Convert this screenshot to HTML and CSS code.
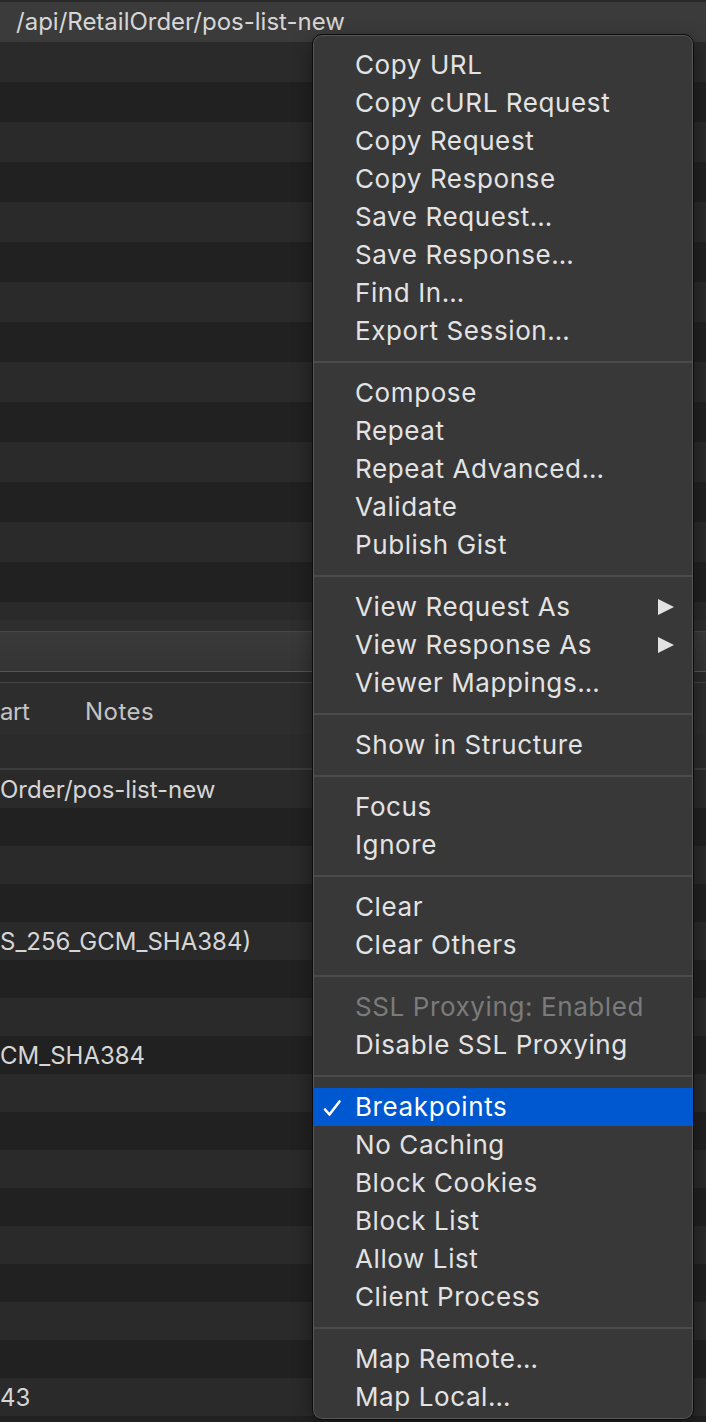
FILE: index.html
```html
<!DOCTYPE html>
<html>
<head>
<meta charset="utf-8">
<link rel="stylesheet" href="styles.css">
</head>
<body>
<div class="app">
  <div class="urlbar">/api/RetailOrder/pos-list-new</div>
  <div class="upper">
    <div class="urow light"></div><div class="urow dark"></div>
    <div class="urow light"></div><div class="urow dark"></div>
    <div class="urow light"></div><div class="urow dark"></div>
    <div class="urow light"></div><div class="urow dark"></div>
    <div class="urow light"></div><div class="urow dark"></div>
    <div class="urow light"></div><div class="urow dark"></div>
    <div class="urow light"></div><div class="urow dark"></div>
    <div class="urow-tail"></div>
  </div>
  <div class="panel"></div>
  <div class="gap"></div>
  <div class="header">
    <span class="hcell start">art</span>
    <span class="hcell notes">Notes</span>
  </div>
  <div class="subheader"></div>
  <div class="lower">
    <div class="lrow light"><span class="cell">Order/pos-list-new</span></div>
    <div class="lrow dark"></div>
    <div class="lrow light"></div>
    <div class="lrow dark"></div>
    <div class="lrow light"><span class="cell">S_256_GCM_SHA384)</span></div>
    <div class="lrow dark"></div>
    <div class="lrow light"></div>
    <div class="lrow dark"><span class="cell">CM_SHA384</span></div>
    <div class="lrow light"></div>
    <div class="lrow dark"></div>
    <div class="lrow light"></div>
    <div class="lrow dark"></div>
    <div class="lrow light"></div>
    <div class="lrow dark"></div>
    <div class="lrow light"></div>
    <div class="lrow dark"></div>
    <div class="lrow light"><span class="cell">43</span></div>
    <div class="lrow dark"></div>
  </div>
</div>

<div class="menu">
  <div class="item">Copy URL</div>
  <div class="item">Copy cURL Request</div>
  <div class="item">Copy Request</div>
  <div class="item">Copy Response</div>
  <div class="item">Save Request…</div>
  <div class="item">Save Response…</div>
  <div class="item">Find In…</div>
  <div class="item">Export Session…</div>
  <div class="sep"></div>
  <div class="item">Compose</div>
  <div class="item">Repeat</div>
  <div class="item">Repeat Advanced…</div>
  <div class="item">Validate</div>
  <div class="item">Publish Gist</div>
  <div class="sep"></div>
  <div class="item has-sub">View Request As<span class="arrow"></span></div>
  <div class="item has-sub">View Response As<span class="arrow"></span></div>
  <div class="item">Viewer Mappings…</div>
  <div class="sep"></div>
  <div class="item">Show in Structure</div>
  <div class="sep"></div>
  <div class="item">Focus</div>
  <div class="item">Ignore</div>
  <div class="sep"></div>
  <div class="item">Clear</div>
  <div class="item">Clear Others</div>
  <div class="sep"></div>
  <div class="item disabled">SSL Proxying: Enabled</div>
  <div class="item">Disable SSL Proxying</div>
  <div class="sep"></div>
  <div class="item selected"><svg class="check" width="20" height="18" viewBox="0 0 20 18"><path d="M3 10.5 L7.5 15.5 L17.5 2.5" fill="none" stroke="#ffffff" stroke-width="2.6" stroke-linecap="round" stroke-linejoin="round"/></svg>Breakpoints</div>
  <div class="item">No Caching</div>
  <div class="item">Block Cookies</div>
  <div class="item">Block List</div>
  <div class="item">Allow List</div>
  <div class="item">Client Process</div>
  <div class="sep"></div>
  <div class="item">Map Remote…</div>
  <div class="item">Map Local…</div>
</div>
</body>
</html>
```

FILE: styles.css
```css
html, body {
  margin: 0;
  padding: 0;
}
body {
  width: 706px;
  height: 1422px;
  overflow: hidden;
  background: #212121;
  font-family: Inter, "Noto Sans", "DejaVu Sans", sans-serif;
  position: relative;
}
.app {
  display: flex;
  flex-direction: column;
  width: 706px;
}
.urlbar {
  border-top: 2px solid #292929;
  height: 40px;
  line-height: 40px;
  background: #3b3b3b;
  color: #d6d6d6;
  font-size: 24px;
  padding-left: 16px;
  white-space: nowrap;
}
.upper {
  display: flex;
  flex-direction: column;
}
.urow {
  height: 40px;
}
.light {
  background: #2a2a2a;
}
.dark {
  background: #212121;
}
.urow-tail {
  height: 29px;
  background: linear-gradient(#2a2a2a 0 18px, #2e2e2e 18px);
}
.panel {
  height: 39px;
  border-top: 1px solid #474747;
  border-bottom: 1px solid #555555;
  background: linear-gradient(#3a3a3a, #343434);
}
.gap {
  height: 10px;
  background: #2a2a2a;
  border-bottom: 1px solid #454545;
}
.header {
  height: 52px;
  padding-top: 4px;
  box-sizing: border-box;
  background: #2d2d2d;
  display: flex;
  align-items: center;
  color: #c4c4c4;
  font-size: 24px;
  letter-spacing: 0.5px;
  white-space: nowrap;
}
.hcell.start {
  width: 85px;
  letter-spacing: -0.5px;
}
.subheader {
  height: 33px;
  background: #2b2b2b;
  border-bottom: 2px solid #3c3c3c;
}
.lower {
  display: flex;
  flex-direction: column;
}
.lrow {
  height: 38px;
  display: flex;
  align-items: center;
  color: #d6d6d6;
  font-size: 24px;
  white-space: nowrap;
  overflow: hidden;
}
.cell {
  display: block;
}

/* context menu overlay */
.menu {
  position: absolute;
  left: 312px;
  top: 34px;
  width: 380px;
  height: 1364px;
  padding: 11px 0 9px;
  background: #383838;
  border: 1px solid #0c0c0c;
  border-radius: 10px;
  box-shadow: inset 0 0 0 1px #565656, 0 6px 20px rgba(0, 0, 0, 0.4);
  overflow: hidden;
  display: flex;
  flex-direction: column;
}
.item {
  height: 38px;
  line-height: 38px;
  padding-left: 42px;
  color: #e3e3e3;
  font-size: 26px;
  letter-spacing: 0.6px;
  white-space: nowrap;
  position: relative;
  flex: none;
}
.item.disabled {
  color: #7b7b7b;
}
.item.selected {
  background: #0058d0;
  color: #ffffff;
}
.check {
  position: absolute;
  left: 9px;
  top: 11px;
}
.arrow {
  position: absolute;
  right: 19px;
  top: 11px;
  width: 0;
  height: 0;
  border-top: 8px solid transparent;
  border-bottom: 8px solid transparent;
  border-left: 16px solid #e3e3e3;
}
.sep {
  flex: none;
  height: 2px;
  margin: 11px 1px;
  background: #4b4b4b;
}
```
